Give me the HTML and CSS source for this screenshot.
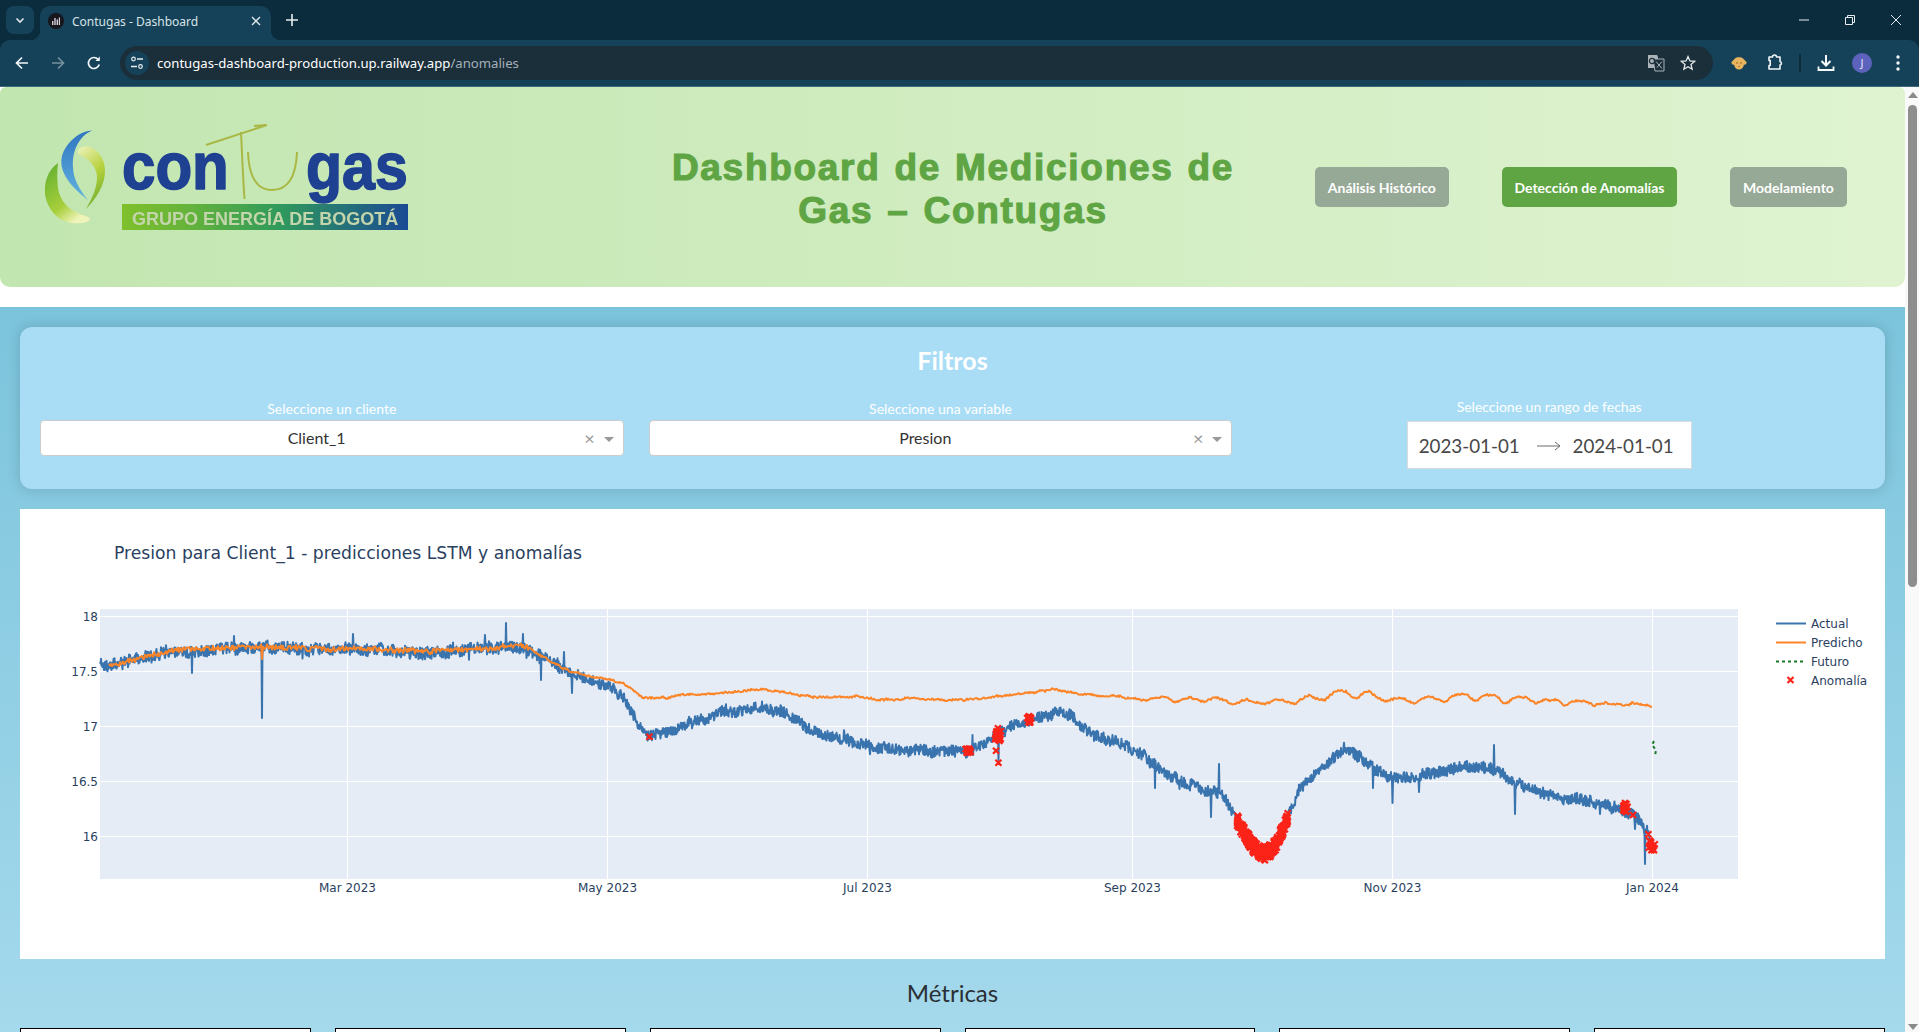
FILE: index.html
```html
<!DOCTYPE html>
<html lang="es">
<head>
<meta charset="utf-8">
<title>Contugas - Dashboard</title>
<link rel="stylesheet" href="styles.css">
</head>
<body>
<div class="browser">
  <div class="tabstrip">
    <button class="tab-menu"><svg width="12" height="12" viewBox="0 0 12 12"><path d="M2.5 4.5 6 8l3.5-3.5" fill="none" stroke="#dfe7ea" stroke-width="1.6"/></svg></button>
    <div class="tab">
      <svg class="favicon" width="16" height="16" viewBox="0 0 16 16"><circle cx="8" cy="8" r="8" fill="#16161c"/><path d="M4 12V8h1.4v4zM6.3 12V5h1.4v7zM8.6 12V6.5H10V12zM10.8 12V4.500h1.200V12z" fill="#d8cdd6"/></svg>
      <span class="tab-title">Contugas - Dashboard</span>
      <svg class="tab-close" width="10" height="10" viewBox="0 0 10 10"><path d="M1 1l8 8M9 1 1 9" stroke="#dfe7ea" stroke-width="1.4"/></svg>
    </div>
    <svg class="new-tab" width="14" height="14" viewBox="0 0 14 14"><path d="M7 1v12M1 7h12" stroke="#e6edf0" stroke-width="1.6"/></svg>
    <div class="spacer"></div>
    <div class="win-btn"><svg width="12" height="12" viewBox="0 0 12 12"><path d="M1 6h10" stroke="#e6edf0" stroke-width="1"/></svg></div>
    <div class="win-btn"><svg width="12" height="12" viewBox="0 0 12 12"><path d="M1.500 3.500h7v7h-7zM3.500 3.500v-2h7v7h-2" fill="none" stroke="#e6edf0" stroke-width="1"/></svg></div>
    <div class="win-btn"><svg width="12" height="12" viewBox="0 0 12 12"><path d="M1 1l10 10M11 1 1 11" stroke="#e6edf0" stroke-width="1"/></svg></div>
  </div>
  <div class="toolbar">
    <div class="tool-btn"><svg width="16" height="16" viewBox="0 0 16 16"><path d="M14 8H2.500M8 2.500 2.500 8 8 13.500" fill="none" stroke="#f2f6f7" stroke-width="1.700"/></svg></div>
    <div class="tool-btn"><svg width="16" height="16" viewBox="0 0 16 16"><path d="M2 8h11.500M8 2.500 13.500 8 8 13.500" fill="none" stroke="#75909d" stroke-width="1.700"/></svg></div>
    <div class="tool-btn"><svg width="16" height="16" viewBox="0 0 16 16"><path d="M13.200 9.500A5.500 5.500 0 1 1 12 4.300" fill="none" stroke="#f2f6f7" stroke-width="1.700"/><path d="M13.800 1.500v4.400H9.400z" fill="#f2f6f7"/></svg></div>
    <div class="omnibox">
      <div class="site-icon"><svg width="14" height="14" viewBox="0 0 14 14"><circle cx="3.500" cy="3" r="1.800" fill="none" stroke="#e8eef0" stroke-width="1.200"/><path d="M7 3h6M1 10.500h6" stroke="#e8eef0" stroke-width="1.300"/><circle cx="10.500" cy="10.500" r="1.800" fill="none" stroke="#e8eef0" stroke-width="1.200"/></svg></div>
      <span class="url">contugas-dashboard-production.up.railway.app<span class="url-path">/anomalies</span></span>
      <div class="spacer"></div>
      <svg class="omni-translate" width="18" height="18" viewBox="0 0 18 18"><path d="M1 1h9l1 2v11H1z" fill="#a9b3b8"/><path d="M6 5h11v12H8z" fill="#1b2f3b" stroke="#a9b3b8" stroke-width="1"/><path d="M9 7.500l6 7M15 7.500l-5 6" stroke="#a9b3b8" stroke-width="1"/><circle cx="5" cy="7" r="2.600" fill="none" stroke="#1b2f3b" stroke-width="1.200"/></svg>
      <svg class="omni-star" width="16" height="16" viewBox="0 0 16 16"><path d="M8 1.600 9.900 6l4.700.400-3.600 3.100 1.100 4.700L8 11.700l-4.100 2.500L5 9.500 1.400 6.400 6.100 6z" fill="none" stroke="#e4e9eb" stroke-width="1.300"/></svg>
    </div>
    <div class="tool-btn ext"><svg width="16" height="14" viewBox="0 0 16 14"><path d="M4 2.500C5 .8 11 .8 12 2.500L15.500 6c.3 2-1.200 3.200-2.500 2.500-.4 3-2.500 5-5 5s-4.600-2-5-5C1.700 9.200.2 8 .5 6z" fill="#e8b45e"/><circle cx="6" cy="7" r=".8" fill="#8a5f22"/><circle cx="10" cy="7" r=".8" fill="#8a5f22"/><path d="M7 10h2l-1 1.200z" fill="#8a5f22"/></svg></div>
    <div class="tool-btn"><svg width="18" height="18" viewBox="0 0 18 18"><path d="M3 3h3.500a2 2 0 0 1 4 0H14v4.500a1.800 1.800 0 0 1 0 3.500V15H3v-3.500h1.200V6.500H3z" fill="none" stroke="#f2f6f7" stroke-width="1.600" stroke-linejoin="round"/></svg></div>
    <div class="tool-divider"></div>
    <div class="tool-btn"><svg width="18" height="18" viewBox="0 0 18 18"><path d="M9 1v10M4.500 7 9 11.500 13.500 7" fill="none" stroke="#f6f9fa" stroke-width="2"/><path d="M1.500 12.500V16h15v-3.500" fill="none" stroke="#f6f9fa" stroke-width="1.800"/></svg></div>
    <div class="tool-btn"><span class="avatar">J</span></div>
    <div class="tool-btn"><svg width="4" height="16" viewBox="0 0 4 16"><circle cx="2" cy="2" r="1.700" fill="#f2f6f7"/><circle cx="2" cy="8" r="1.700" fill="#f2f6f7"/><circle cx="2" cy="14" r="1.700" fill="#f2f6f7"/></svg></div>
  </div>
</div>

<div class="viewport">
  <div class="page">
    <header class="header">
      <svg class="logo" width="363" height="108" viewBox="45 123 363 108">
        <defs>
          <linearGradient id="swirlBlue" x1="0" y1="0" x2="0" y2="1"><stop offset="0" stop-color="#2f74c0"/><stop offset="1" stop-color="#62b4e0"/></linearGradient>
          <linearGradient id="swirlGreen" x1="0" y1="0" x2="0.6" y2="1"><stop offset="0" stop-color="#5fae2e"/><stop offset=".7" stop-color="#a8cf3c"/><stop offset="1" stop-color="#eef3b8"/></linearGradient>
          <linearGradient id="swirlYellow" x1="0.2" y1="0" x2="0.6" y2="1"><stop offset="0" stop-color="#e8efb0"/><stop offset=".5" stop-color="#b8d23e"/><stop offset="1" stop-color="#6fae2e"/></linearGradient>
          <linearGradient id="barGrad" x1="0" y1="0" x2="1" y2="0"><stop offset="0" stop-color="#7fc02c"/><stop offset=".25" stop-color="#62b23c"/><stop offset=".55" stop-color="#2f9a5c"/><stop offset="1" stop-color="#1b4a94"/></linearGradient>
        </defs>
        <path d="M92 130.500C80 131 66 142 62 156c-3 13 4 27 26 44-9-11-15-22-15-33-1-16 6-31 19-36.500z" fill="url(#swirlBlue)"/>
        <path d="M58 163C48 170 44 182 45 194c2 15 13 27 26 29 8 1 18 0 19-4 0-2-5-3-10-5-11-4-20-13-22-26-1-9-1-17 0-25z" fill="url(#swirlGreen)"/>
        <path d="M78 153c-1-5 6-8 12-6 10 4 15 14 15 24 0 14-9 28-19 38 5-9 11-20 11-32 0-10-8-18-17-22-1 0-2-1-2-2z" fill="url(#swirlYellow)"/>
        <text class="logo-word" transform="translate(122 188.500) scale(.91 1)">con</text>
        <text class="logo-word" transform="translate(306 188.500) scale(.895 1)">gas</text>
        <path d="M206 145 267 125M266 125l-12 1M241 132c1 20 2 46 3.500 67M248 152c1 26 9 38 24 38s24-12 25-38" fill="none" stroke="#a9b845" stroke-width="2"/>
        <rect x="122" y="204" width="286" height="26" fill="url(#barGrad)"/>
        <text class="logo-tag" transform="translate(132 225)">GRUPO ENERGÍA DE BOGOTÁ</text>
      </svg>
      <h1 class="title">Dashboard de Mediciones de Gas – Contugas</h1>
      <nav class="nav">
        <a class="nav-btn">Análisis Histórico</a>
        <a class="nav-btn active">Detección de Anomalías</a>
        <a class="nav-btn">Modelamiento</a>
      </nav>
    </header>

    <main class="content">
      <section class="filters">
        <h2 class="filters-title">Filtros</h2>
        <div class="filters-row">
          <div class="filter">
            <label class="filter-label">Seleccione un cliente</label>
            <div class="select">
              <span class="select-value">Client_1</span>
              <span class="select-clear">×</span>
              <span class="select-caret"></span>
            </div>
          </div>
          <div class="filter">
            <label class="filter-label">Seleccione una variable</label>
            <div class="select">
              <span class="select-value">Presion</span>
              <span class="select-clear">×</span>
              <span class="select-caret"></span>
            </div>
          </div>
          <div class="filter filter-date">
            <label class="filter-label">Seleccione un rango de fechas</label>
            <div class="date-range">
              <span>2023-01-01</span>
              <svg class="date-arrow" width="24" height="12" viewBox="0 0 24 12"><path d="M0 6h23M18 2l5 4-5 4" fill="none" stroke="#6a6a6a" stroke-width="1"/></svg>
              <span>2024-01-01</span>
            </div>
          </div>
        </div>
      </section>

      <section class="chart-card">
        <svg class="chart" id="chart" width="1865" height="450" viewBox="20 509 1865 450">
          <text class="chart-title" x="114" y="559">Presion para Client_1 - predicciones LSTM y anomalías</text>
          <rect class="plot-bg" x="100" y="609" width="1638" height="270"/>
          <g class="grid">
            <path d="M347.500 609v270M607.500 609v270M867.500 609v270M1132.500 609v270M1392.500 609v270M1652.500 609v270"/>
            <path d="M100 616.500h1638M100 671.500h1638M100 726.500h1638M100 781.500h1638M100 836.500h1638"/>
          </g>
          <g class="ticks-y">
            <text x="98" y="621">18</text>
            <text x="98" y="676">17.5</text>
            <text x="98" y="731">17</text>
            <text x="98" y="786">16.5</text>
            <text x="98" y="841">16</text>
          </g>
          <g class="ticks-x">
            <text x="347.500" y="892">Mar 2023</text>
            <text x="607.500" y="892">May 2023</text>
            <text x="867.500" y="892">Jul 2023</text>
            <text x="1132.500" y="892">Sep 2023</text>
            <text x="1392.500" y="892">Nov 2023</text>
            <text x="1652.500" y="892">Jan 2024</text>
          </g>
          <path id="traceActual" class="trace-actual"/>
          <path id="tracePred" class="trace-pred"/>
          <path class="trace-future" d="M1654 741 1652 745 1656 750 1655 756"/>
          <path id="traceAnom" class="trace-anom"/>
          <g class="legend">
            <path class="trace-actual" d="M1776 623.500h30"/>
            <text x="1811" y="628">Actual</text>
            <path class="trace-pred" d="M1776 642.500h30"/>
            <text x="1811" y="647">Predicho</text>
            <path class="trace-future" d="M1776 661.500h30"/>
            <text x="1811" y="666">Futuro</text>
            <path class="trace-anom" d="M1787.500 677l6 6M1793.500 677l-6 6"/>
            <text x="1811" y="685">Anomalía</text>
          </g>
        </svg>
      </section>

      <h2 class="metrics-title">Métricas</h2>
      <section class="metrics">
        <div class="metric"></div>
        <div class="metric"></div>
        <div class="metric"></div>
        <div class="metric"></div>
        <div class="metric"></div>
        <div class="metric"></div>
      </section>
    </main>
  </div>
  <div class="scrollbar">
    <span class="scroll-up"></span>
    <span class="scroll-thumb"></span>
    <span class="scroll-gap"></span>
    <span class="scroll-down"></span>
  </div>
</div>
<script src="chart.js"></script>
</body>
</html>
```
FILE: styles.css
```css
* { box-sizing: border-box; }
html, body { margin: 0; height: 100%; overflow: hidden; background: #fff; }
body { display: flex; flex-direction: column; font-family: "Lato", "Liberation Sans", sans-serif; }
.spacer { flex: 1; }

/* browser chrome */
.browser { flex: 0 0 87px; background: #0b2c3d; font-family: "Noto Sans", "Open Sans", sans-serif; }
.tabstrip { height: 40px; display: flex; align-items: flex-end; padding-left: 6px; }
.tab-menu { width: 28px; height: 28px; margin-bottom: 6px; border: 0; border-radius: 8px; background: #154259; display: flex; align-items: center; justify-content: center; padding: 0; }
.tab { position: relative; width: 231px; height: 34px; margin-left: 6px; padding: 0 9px 4px 8px; display: flex; align-items: center; background: #154259; border-radius: 10px 10px 0 0; }
.tab::before, .tab::after { content: ""; position: absolute; bottom: 0; width: 10px; height: 10px; }
.tab::before { left: -10px; background: radial-gradient(circle at 0 0, transparent 10px, #154259 10.500px); }
.tab::after { right: -10px; background: radial-gradient(circle at 100% 0, transparent 10px, #154259 10.500px); }
.favicon { flex: none; }
.tab-title { margin-left: 8px; font-size: 12px; color: #d8e2e7; white-space: nowrap; flex: 1; }
.tab-close { flex: none; margin-right: 1px; }
.new-tab { margin: 0 0 13px 14px; }
.win-btn { width: 46px; height: 40px; display: flex; align-items: center; justify-content: center; }
.toolbar { height: 47px; display: flex; align-items: center; padding: 0 3px 1px 4px; background: #154259; border-bottom: 1px solid #3b6a7c; border-radius: 10px 10px 0 0; }
.tool-btn { flex: none; width: 36px; height: 36px; display: flex; align-items: center; justify-content: center; }
.omnibox { flex: 1; height: 34px; margin: 0 8px; display: flex; align-items: center; padding: 0 17px 0 5px; background: #1b2f3b; border-radius: 17px; }
.site-icon { width: 24px; height: 24px; border-radius: 50%; background: #154259; display: flex; align-items: center; justify-content: center; }
.url { margin-left: 8px; font-size: 13.150px; color: #fff; white-space: nowrap; }
.url-path { color: #a3b0b7; }
.omni-star { margin-left: 15px; }
.tool-divider { flex: none; width: 2px; height: 18px; margin: 0 7px 0 6px; background: #0b2c3d; }
.avatar { width: 20px; height: 20px; border-radius: 50%; background: #5d62bd; color: #e6e7f7; font-size: 11px; line-height: 20px; text-align: center; }

/* page */
.viewport { flex: 1; min-height: 0; display: flex; }
.page { flex: 1; min-width: 0; display: flex; flex-direction: column; border-radius: 6px 6px 0 0; overflow: hidden; }
.header { flex: 0 0 200px; margin-bottom: 20px; display: flex; align-items: center; padding: 0 59px 0 45px; background: linear-gradient(90deg, #c2e6b0, #dff3d1); border-radius: 0 0 10px 10px; }
.logo { flex: none; margin-bottom: 20px; filter: blur(.35px); }
.logo-word { font-family: "Liberation Sans", sans-serif; font-weight: 700; font-size: 66px; fill: #1f4192; stroke: #1f4192; stroke-width: 1.600; stroke-linejoin: round; }
.logo-tag { font-family: "Liberation Sans", sans-serif; font-weight: 700; font-size: 18px; fill: #c3d5ab; }
.title { flex: none; width: 600px; margin: 4px 0 0 245px; font-family: "Liberation Sans", sans-serif; font-weight: 700; font-size: 37px; line-height: 43px; letter-spacing: 1.700px; word-spacing: 2px; text-align: center; color: #5fa544; -webkit-text-stroke: 1.100px #5fa544; }
.nav { flex: none; margin-left: 62px; display: flex; gap: 53px; }
.nav-btn { height: 40px; padding: 0 12.800px; display: flex; align-items: center; border-radius: 5px; background: #96a896; color: #fff; font-size: 14px; font-weight: 700; white-space: nowrap; }
.nav-btn.active { background: #5fa544; }

.content { flex: 1; min-height: 0; overflow: hidden; padding: 20px; background: linear-gradient(180deg, #7bc4dc, #a5d9ec); }
.filters { height: 162px; padding-top: 18px; background: #a9ddf6; border-radius: 12px; box-shadow: 0 0 14px rgba(0, 0, 0, .16); }
.filters-title { margin: 0 0 24px; font-size: 25px; line-height: 30px; font-weight: 700; color: #fff; text-align: center; }
.filters-row { display: grid; grid-template-columns: repeat(3, 1fr); gap: 25px; padding: 0 44px 0 20px; }
.filter { display: flex; flex-direction: column; align-items: stretch; }
.filter-date { align-items: center; margin-top: -2px; }
.filter-label { height: 21px; line-height: 20px; font-size: 14px; color: #fff; text-align: center; }
.filter-date .filter-label { height: 24px; }
.select { height: 36px; display: flex; align-items: center; padding-right: 9px; background: #fff; border: 1px solid #ccc; border-radius: 4px; }
.select-value { flex: 1; padding: 0 0 1px 8px; text-align: center; font-size: 16px; color: #333; }
.select-clear { margin-right: 9px; font-size: 18px; line-height: 1; color: #999; }
.select-caret { width: 0; height: 0; margin-top: 2px; border: 5px solid transparent; border-top-color: #999; border-bottom: 0; }
.date-range { width: 285px; height: 48px; display: flex; align-items: center; justify-content: space-between; padding: 0 17px 0 11px; background: #fff; border: 1px solid #dbdbdb; font-size: 18.800px; color: #484848; }
.date-arrow { margin: 2px 0 0 6px; }

.chart-card { height: 450px; margin-top: 20px; background: #fff; }
.chart { display: block; font-family: "DejaVu Sans", "Liberation Sans", sans-serif; }
.chart-title { font-size: 17.200px; fill: #2a3f5f; }
.plot-bg { fill: #e5ecf6; }
.grid path { stroke: #fff; stroke-width: 1; fill: none; }
.ticks-y text, .ticks-x text, .legend text { font-size: 12px; fill: #2a3f5f; }
.ticks-y text { text-anchor: end; }
.ticks-x text { text-anchor: middle; }
.trace-actual { fill: none; stroke: #3a74ae; stroke-width: 2; stroke-linejoin: round; }
.trace-pred { fill: none; stroke: #fb8528; stroke-width: 2; stroke-linejoin: round; }
.trace-future { fill: none; stroke: #1a7a2a; stroke-width: 2; stroke-dasharray: 3 3; }
.trace-anom { fill: none; stroke: #fb2318; stroke-width: 2.200; }

.metrics-title { margin: 19px 0 20px; font-size: 24px; line-height: 30px; font-weight: 400; color: #2a2f35; text-align: center; }
.metrics { display: grid; grid-template-columns: repeat(6, 1fr); gap: 24px; }
.metric { height: 110px; background: #fff; border: 1px solid #000; }

/* scrollbar */
.scrollbar { flex: 0 0 14px; display: flex; flex-direction: column; align-items: center; background: #f9f9f9; padding: 5px 0 2px 1px; }
.scroll-up { width: 0; height: 0; border: 5px solid transparent; border-top: 0; border-bottom: 6px solid #8a8a8a; }
.scroll-thumb { width: 9px; height: 482px; margin-top: 7px; border-radius: 5px; background: #8e8e8e; }
.scroll-gap { flex: 1; }
.scroll-down { width: 0; height: 0; border: 5px solid transparent; border-bottom: 0; border-top: 6px solid #8a8a8a; }
```
FILE: chart.js
```javascript
(function () {
  var seed = 20230101;
  function rnd() {
    seed = (seed + 0x6D2B79F5) | 0;
    var t = Math.imul(seed ^ (seed >>> 15), 1 | seed);
    t = (t + Math.imul(t ^ (t >>> 7), 61 | t)) ^ t;
    return ((t ^ (t >>> 14)) >>> 0) / 4294967296;
  }
  var actual = [[100,663],[109,666.500],[129,661.500],[150,657],[166,652.700],[190,650.700],[223,649],[264,647],[284,646.700],[321,650],[354,648.700],[386,650],[427,652.700],[468,649],[521,647],[537,655],[558,666.700],[582,676],[607,685],[623,696.700],[635,720],[648,736],[668,731.700],[681,726],[721,713.300],[762,706.700],[783,711.700],[815,731.700],[844,741.700],[885,747.300],[925,751.700],[966,751.700],[991,741.700],[999,731.700],[1028,720.700],[1060,711.700],[1077,720],[1089,733.300],[1117,741.700],[1142,755],[1170,776.700],[1199,786.700],[1224,796.700],[1236,818],[1244,832],[1252,845],[1259,852],[1265,854],[1271,850],[1278,841],[1287,820],[1299,790],[1320,770],[1344,748.300],[1360,756.700],[1381,773.300],[1401,778.300],[1442,771.700],[1465,765],[1495,770],[1512,781.700],[1540,793.300],[1573,800],[1618,806.700],[1638,818.300],[1648,833.300],[1651,846]];
  var pred = [[109,666],[133,660],[166,652],[190,649],[223,648],[264,647],[300,648],[321,649],[354,648.500],[386,649.500],[427,651.500],[468,649],[500,647.500],[523,645],[537,653],[562,668],[582,675],[607,679],[623,683],[644,698],[668,698],[680,694],[700,695],[762,689.300],[787,692.700],[815,696.700],[860,696],[877,700],[909,698],[942,700],[971,699.300],[999,696.700],[1056,689.300],[1089,695],[1117,696.700],[1144,700],[1166,696.700],[1175,702.700],[1191,697.700],[1205,702.700],[1215,697.300],[1236,704.300],[1244,699.300],[1266,704.300],[1277,699.300],[1295,704],[1308,695],[1324,700.700],[1336,690.700],[1346,690.700],[1356,700],[1367,690.700],[1385,701.700],[1401,697.300],[1414,703.300],[1430,696],[1444,702.300],[1454,695],[1467,695],[1475,701.700],[1485,694.300],[1495,695],[1505,703.300],[1516,697.300],[1526,697.300],[1536,704.300],[1544,699.300],[1557,700],[1565,705.700],[1575,700.700],[1585,701.300],[1593,706],[1605,702.700],[1618,704],[1624,706],[1634,703.300],[1646,705],[1652.500,706.700]];
  var spikes = [[192,673],[262,718],[541,680],[572,693],[506,623],[564,652],[523,634],[485,635],[353,634],[234,636],[972.500,735],[998.400,763],[1155,788],[1211,817],[1219,764],[1373,788],[1392.500,803],[1419,792],[1494,745],[1515,814],[1645,864],[1635,829],[1600,814]];

  function at(pts, x) {
    if (x <= pts[0][0]) return pts[0][1];
    for (var i = 1; i < pts.length; i++) {
      if (x <= pts[i][0]) {
        var a = pts[i - 1], b = pts[i];
        return a[1] + (b[1] - a[1]) * (x - a[0]) / (b[0] - a[0]);
      }
    }
    return pts[pts.length - 1][1];
  }
  function smooth(pts, x, w) {
    var s = 0, n = 0;
    for (var d = -w; d <= w; d += 1) { s += at(pts, x + d); n++; }
    return s / n;
  }
  function f(v) { return v.toFixed(1); }

  var d = "", x, y, slow = 0, spikeMap = {};
  spikes.forEach(function (s) { spikeMap[Math.round(s[0] * 2)] = s[1]; });
  for (x = 100; x <= 1651; x += 0.5) {
    slow = slow * 0.9 + (rnd() - 0.5) * 1.500;
    var amp = x < 530 ? 12 : 11;
    y = at(actual, x) + slow + (rnd() - 0.5) * amp;
    if (rnd() < 0.012) y += (rnd() < 0.55 ? -1 : 1) * (2 + rnd() * 3.500);
    var sp = spikeMap[Math.round(x * 2)];
    d += (d ? "L" : "M") + f(x) + " " + f(sp !== undefined ? sp : y);
  }
  document.getElementById("traceActual").setAttribute("d", d);

  d = ""; slow = 0;
  for (x = 109; x <= 1652.5; x += 1) {
    slow = slow * 0.75 + (rnd() - 0.5) * 1;
    var a2 = x < 530 ? 5 : 1.800;
    y = smooth(pred, x, 2) + slow + (rnd() - 0.5) * a2;
    if (x === 262) y = 659;
    d += (d ? "L" : "M") + f(x) + " " + f(y);
  }
  document.getElementById("tracePred").setAttribute("d", d);

  var m = "";
  function mark(cx, cy) {
    m += "M" + f(cx - 3) + " " + f(cy - 3) + "l6 6M" + f(cx + 3) + " " + f(cy - 3) + "l-6 6";
  }
  function box(x0, x1, y0, y1, n) {
    for (var i = 0; i < n; i++) mark(x0 + rnd() * (x1 - x0), y0 + rnd() * (y1 - y0));
  }
  mark(649.400, 736.700);
  box(965, 972, 748, 753, 14);
  box(995, 1001, 727, 741, 24);
  mark(996, 750.700);
  mark(998.400, 762.700);
  box(1027, 1031, 716, 725, 14);
  for (var i = 0; i < 260; i++) {
    var cx = 1237 + rnd() * 51;
    mark(cx, at(actual, cx) + (rnd() - 0.5) * 13);
  }
  box(1622, 1628, 804, 812, 14);
  mark(1625, 803);
  mark(1633, 815);
  mark(1648.400, 834.300);
  box(1647, 1655, 840, 851, 12);
  document.getElementById("traceAnom").setAttribute("d", m);
})();
```
